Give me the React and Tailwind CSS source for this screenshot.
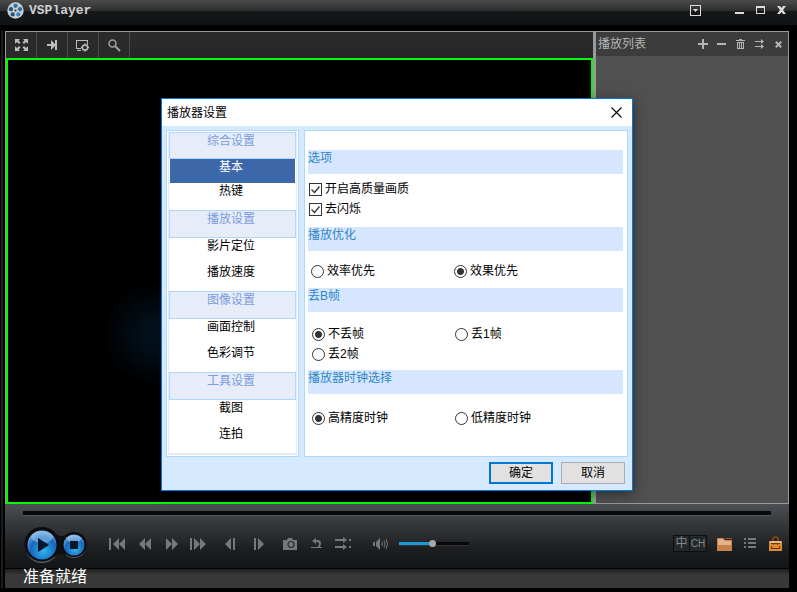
import React, { useState } from 'react';

const MENU = [
  { title: '综合设置', items: ['基本', '热键'] },
  { title: '播放设置', items: ['影片定位', '播放速度'] },
  { title: '图像设置', items: ['画面控制', '色彩调节'] },
  { title: '工具设置', items: ['截图', '连拍'] },
];

const Icon = ({ w = 16, h = 16, children, className = '' }) => (
  <svg width={w} height={h} viewBox={`0 0 ${w} ${h}`} fill="currentColor" className={`shrink-0 ${className}`} aria-hidden="true">
    {children}
  </svg>
);

const IconButton = ({ label, className, children, onClick }) => (
  <button type="button" aria-label={label} title={label} onClick={onClick} className={`flex items-center justify-center ${className}`}>
    {children}
  </button>
);

const Logo = () => (
  <svg width="17" height="17" viewBox="0 0 17 17" aria-hidden="true">
    <circle cx="8.5" cy="8.5" r="8.2" fill="#c9cdd0" />
    <circle cx="8.5" cy="3.8" r="2.1" fill="#2b6ea8" />
    <circle cx="4" cy="7.2" r="2.1" fill="#1d5488" />
    <circle cx="13" cy="7.2" r="2.1" fill="#2b6ea8" />
    <circle cx="5.7" cy="12.4" r="2.1" fill="#1d5488" />
    <circle cx="11.3" cy="12.4" r="2.1" fill="#3a86c4" />
    <circle cx="8.5" cy="8.6" r="1" fill="#333" />
  </svg>
);

const TitleBar = () => (
  <header className="flex h-[25px] shrink-0 items-start bg-[linear-gradient(#4b4b4b_0,#2c2d2e_11px,#151719_11px,#111315_100%)] pr-[5px] pl-[7px] text-[#dcdcdc]">
    <div className="flex h-[21px] flex-1 items-center gap-[5px]">
      <Logo />
      <h1 className="font-['Liberation_Mono',monospace] text-[13px] leading-[20px] font-bold text-[#d0d0d0]">VSPlayer</h1>
    </div>
    <IconButton label="菜单" className="mr-[23px] h-[21px] w-[21px]">
      <Icon w={11} h={11}>
        <path d="M0 0h11v11H0zM1 1v9h9V1z" fillRule="evenodd" />
        <path d="M3 4h5L5.500 7z" />
      </Icon>
    </IconButton>
    <IconButton label="最小化" className="h-[21px] w-[21px]">
      <Icon w={9} h={9}><path d="M0 6h9v2H0z" /></Icon>
    </IconButton>
    <IconButton label="最大化" className="h-[21px] w-[21px]">
      <Icon w={9} h={9}><path d="M0 0h9v8H0zM1 2v5h7V2z" fillRule="evenodd" /></Icon>
    </IconButton>
    <IconButton label="关闭" className="h-[21px] w-[21px]">
      <Icon w={9} h={9}><path d="M0 0h3l1.500 2L6 0h3L6 4l3 4H6L4.500 6 3 8H0l3-4z" /></Icon>
    </IconButton>
  </header>
);

const toolButton = 'h-full w-[31px] border-r border-[#4a4a4a] bg-[#2a2a2a]';

const VideoArea = () => (
  <section className="flex min-w-0 flex-1 flex-col border-t border-l border-[#999]">
    <div className="flex h-[26px] shrink-0 bg-[linear-gradient(#2c2c2c,#262626)] text-[#bdbdbd]">
      <IconButton label="全屏" className={toolButton}>
        <Icon w={13} h={12}>
          <path d="M0 0h5L3.500 1.500l2 2-1.500 1.500-2-2L0.500 4.500 0 4zM13 0H8l1.500 1.500-2 2L9 5l2-2 1.500 1.500.5-.5zM0 12h5l-1.500-1.500 2-2L4 7 2 9 .5 7.500 0 8zM13 12H8l1.500-1.500-2-2L9 7l2 2 1.500-1.500.5.5z" />
        </Icon>
      </IconButton>
      <IconButton label="置顶" className={toolButton}>
        <Icon w={11} h={12}><path d="M0 5h4V1l4 4V1h2v10H8V7l-4 4V7H0z" /></Icon>
      </IconButton>
      <IconButton label="设置" className={toolButton}>
        <Icon w={14} h={13}>
          <path d="M0 1h12v5h-1V2H1v7h4v1H0zM1 11h4v1H1z" />
          <circle cx="9" cy="8.500" r="2.600" fill="none" stroke="currentColor" strokeWidth="1.500" />
          <path d="M8.300 4.500h1.400v1.500H8.300zM8.300 11h1.400v1.500H8.300zM5 7.800h1.500v1.400H5zM11.500 7.800H13v1.400h-1.500z" />
        </Icon>
      </IconButton>
      <IconButton label="缩放" className={toolButton}>
        <Icon w={13} h={13} className="text-[#a0a0a0]">
          <circle cx="4.500" cy="4.500" r="3.500" fill="none" stroke="currentColor" strokeWidth="1.500" />
          <path d="M7 7l5 5" stroke="currentColor" strokeWidth="2" />
        </Icon>
      </IconButton>
    </div>
    <div className="flex-1 border-2 border-[#00fb06] bg-[radial-gradient(ellipse_70px_55px_at_28%_62%,#051828,transparent)]" />
  </section>
);

const listButton = 'h-6 w-[19px]';

const Playlist = () => (
  <aside className="flex w-[196px] shrink-0 flex-col border border-l-3 border-[#999] bg-[#505050] text-[#b5b5b5]">
    <div className="flex h-6 items-center bg-[#3c3c3c] pl-[2px]">
      <h2 className="flex-1 text-xs">播放列表</h2>
      <IconButton label="添加" className={listButton}>
        <Icon w={10} h={10}><path d="M4 0h2v4h4v2H6v4H4V6H0V4h4z" /></Icon>
      </IconButton>
      <IconButton label="移除" className={listButton}>
        <Icon w={9} h={10}><path d="M0 4h9v2H0z" /></Icon>
      </IconButton>
      <IconButton label="清空" className={listButton}>
        <Icon w={9} h={10}>
          <path d="M3 0h3v1h3v1H0V1h3zM1 3h7v7H1zM2 4v5h1V4zM4 4v5h1V4zM6 4v5h1V4z" fillRule="evenodd" />
        </Icon>
      </IconButton>
      <IconButton label="顺序播放" className={listButton}>
        <Icon w={10} h={10}><path d="M0 2h6V0l3 2.500L6 5V3H0zM0 7h6V5l3 2.500L6 10V8H0z" /></Icon>
      </IconButton>
      <IconButton label="关闭列表" className={listButton}>
        <Icon w={7} h={7}><path d="M.8.8l5.400 5.400M6.200.8L.8 6.200" stroke="currentColor" strokeWidth="2" /></Icon>
      </IconButton>
    </div>
  </aside>
);

const ctl27 = 'h-8 w-[27px]';
const ctl29 = 'h-8 w-[29px]';

const TransportCluster = () => (
  <div className="relative flex h-10 w-[68px] items-center pt-[2px] pl-[4px]">
    <svg className="absolute inset-0" width="68" height="40" viewBox="0 0 68 40" aria-hidden="true">
      <defs>
        <linearGradient id="rim" x1="0" y1="0" x2="0" y2="1">
          <stop offset="0" stopColor="#08090a" />
          <stop offset="0.7" stopColor="#1b1c1e" />
          <stop offset="1" stopColor="#5d5f61" />
        </linearGradient>
        <radialGradient id="orb" cx="0.55" cy="0.7" r="0.75">
          <stop offset="0" stopColor="#2fb4ea" />
          <stop offset="0.6" stopColor="#1766bd" />
          <stop offset="1" stopColor="#8fc0ec" />
        </radialGradient>
      </defs>
      <circle cx="19" cy="21" r="18" fill="url(#rim)" />
      <circle cx="51" cy="21" r="13" fill="url(#rim)" />
      <path d="M31 9q6 5 12 2v20q-6-3-12 2z" fill="#0f1011" />
      <circle cx="19" cy="21" r="16.500" fill="#0b0d10" />
      <circle cx="51" cy="21" r="12" fill="#0b0d10" />
      <circle cx="19" cy="21" r="14.500" fill="url(#orb)" />
      <circle cx="51" cy="21" r="10.500" fill="url(#orb)" />
      <ellipse cx="19" cy="13" rx="11" ry="6" fill="#b9dcf7" opacity="0.45" />
      <ellipse cx="51" cy="15" rx="7" ry="4" fill="#c9e6fa" opacity="0.45" />
    </svg>
    <IconButton label="播放" className="relative h-[30px] w-[30px] rounded-full pl-[3px] text-[#07182c]">
      <Icon w={12} h={14}><path d="M0 0l11 7-11 7z" /></Icon>
    </IconButton>
    <IconButton label="停止" className="relative ml-[6px] h-[22px] w-[22px] rounded-full text-[#07182c]">
      <Icon w={8} h={8}><path d="M0 0h8v8H0z" /></Icon>
    </IconButton>
  </div>
);

const Controls = () => {
  const [volume, setVolume] = useState(48);

  return (
    <section className="h-16 shrink-0 bg-[linear-gradient(#4c4f53_0,#35383b_20px,#1d1e20_45px,#141516_100%)] pt-[7px] text-[#75797c]">
      <div className="flex pr-[18px] pl-[18px]">
        <input
          type="range"
          aria-label="播放进度"
          defaultValue="0"
          className="h-[5px] w-full appearance-none border-b border-[#55585b] bg-[#08090a] [&::-webkit-slider-thumb]:w-0 [&::-webkit-slider-thumb]:appearance-none"
        />
      </div>
      <div className="flex h-[54px] items-center pt-px pl-[18px]">
        <TransportCluster />
        <div className="ml-[13px] flex">
          <IconButton label="上一个" className={ctl27}>
            <Icon w={17} h={12}><path d="M0 0h2v12H0zM4 6l6-6v12zM10 6l6-6v12z" /></Icon>
          </IconButton>
          <IconButton label="快退" className={ctl27}>
            <Icon w={12} h={12}><path d="M0 6l6-6v12zM6 6l6-6v12z" /></Icon>
          </IconButton>
          <IconButton label="快进" className={ctl27}>
            <Icon w={12} h={12}><path d="M0 0l6 6-6 6zM6 0l6 6-6 6z" /></Icon>
          </IconButton>
          <IconButton label="下一个" className={ctl27}>
            <Icon w={17} h={12}><path d="M0 0h2v12H0zM4 0l6 6-6 6zM10 0l6 6-6 6z" /></Icon>
          </IconButton>
        </div>
        <div className="ml-[3px] flex">
          <IconButton label="单帧后退" className={ctl29}>
            <Icon w={10} h={12}><path d="M0 6l6-6v12zM8 0h2v12H8z" /></Icon>
          </IconButton>
          <IconButton label="单帧前进" className={ctl29}>
            <Icon w={10} h={12}><path d="M0 0h2v12H0zM4 0l6 6-6 6z" /></Icon>
          </IconButton>
        </div>
        <div className="ml-[3px] flex">
          <IconButton label="截图" className={ctl27}>
            <Icon w={14} h={12}>
              <path d="M0 2h4l1-2h4l1 2h4v10H0z" />
              <circle cx="8" cy="6.500" r="3" fill="none" stroke="#26282a" strokeWidth="1.200" />
            </Icon>
          </IconButton>
          <IconButton label="循环" className={ctl27}>
            <Icon w={12} h={12}>
              <path d="M1 3L5 0v2h1.500q3.500 0 3.500 3.500 0 2-1.500 3.500H11v1H0V9h6.500Q8 7.500 8 6q0-2-2-2H5v2z" />
            </Icon>
          </IconButton>
          <IconButton label="播放顺序" className={ctl27}>
            <Icon w={17} h={13}>
              <path d="M0 2h8V0l4 3-4 3V4H0zM0 9h8V7l4 3-4 3v-2H0zM14 2h2v2h-2zM14 9h2v2h-2z" />
            </Icon>
          </IconButton>
        </div>
        <IconButton label="静音" className="ml-[10px] h-8 w-[27px]">
          <Icon w={15} h={12}>
            <path d="M0 4h2v4H0zM3 4l4-4v12L3 8z" />
            <path d="M9 4q1 2 0 4M11 2.500q2 3.500 0 7M13 1q3 5 0 10" fill="none" stroke="currentColor" />
          </Icon>
        </IconButton>
        <input
          type="range"
          aria-label="音量"
          min="0"
          max="100"
          value={volume}
          onChange={(e) => setVolume(e.target.value)}
          style={{ backgroundImage: `linear-gradient(90deg, #1b9ad8 ${volume}%, #060708 ${volume}%)` }}
          className="ml-[5px] h-[4px] w-[70px] appearance-none border-b border-[#333] [&::-webkit-slider-thumb]:h-[7px] [&::-webkit-slider-thumb]:w-[7px] [&::-webkit-slider-thumb]:appearance-none [&::-webkit-slider-thumb]:rounded-full [&::-webkit-slider-thumb]:bg-[#a8a8a8]"
        />
        <div className="ml-auto flex items-center">
          <div className="mr-[4px] flex h-[17px] border border-[#0d0e0f] text-xs leading-[15px] text-[#84898d]">
            <button type="button" className="w-4 border-r border-[#0d0e0f] bg-[#25282a]">中</button>
            <button type="button" className="w-4 bg-[#25282a] font-['Liberation_Sans',sans-serif] text-[10px]">CH</button>
          </div>
          <IconButton label="打开文件" className="h-8 w-[27px]">
            <Icon w={16} h={14}>
              <path d="M0 1h6l2 2h7v11H0z" fill="#c9814b" />
              <path d="M1 2h5l2 2h6v4H1z" fill="#e3b38e" />
              <path d="M8 1h7v1H8z" fill="#99592d" />
            </Icon>
          </IconButton>
          <IconButton label="播放列表" className="h-8 w-[24px]">
            <Icon w={12} h={11}>
              <path d="M0 0h2v2H0zM4 0h8v2H4zM0 4h2v2H0zM4 4h8v2H4zM0 8h2v2H0zM4 8h8v2H4z" />
            </Icon>
          </IconButton>
          <IconButton label="工具箱" className="h-8 w-[27px]">
            <Icon w={13} h={15}>
              <path d="M4 5V3q0-2 2.500-2T9 3v2" fill="none" stroke="#8b4a14" strokeWidth="1.500" />
              <path d="M0 5h13v10H0z" fill="#dc8a33" />
              <path d="M1 5h11v2H1z" fill="#efb985" />
              <path d="M2 7h9v1H2zM4 8h1v1H4zM8 8h1v1H8zM2 10h1v2h7v-2h1v3H2z" fill="#6b3808" />
            </Icon>
          </IconButton>
        </div>
      </div>
    </section>
  );
};

const Section = ({ title, bodyClass, children }) => (
  <fieldset className="block">
    <legend className="block h-6 w-full bg-[#d6e6ff] leading-[16px] text-[#2f86c6]">{title}</legend>
    <div className={bodyClass}>{children}</div>
  </fieldset>
);

const Check = ({ label }) => (
  <label className="flex h-5 items-center gap-[3px]">
    <span className="grid">
      <input type="checkbox" defaultChecked className="peer col-start-1 row-start-1 h-[13px] w-[13px] appearance-none border border-[#333] bg-white" />
      <svg className="pointer-events-none invisible col-start-1 row-start-1 peer-checked:visible" width="13" height="13" viewBox="0 0 13 13" aria-hidden="true">
        <path d="M2.500 6.500l3 3 5-6" fill="none" stroke="#333" strokeWidth="1.300" />
      </svg>
    </span>
    {label}
  </label>
);

const Radio = ({ name, label, checked }) => (
  <label className="flex h-5 items-center gap-[3px]">
    <input
      type="radio"
      name={name}
      defaultChecked={checked}
      className="h-[13px] w-[13px] appearance-none rounded-full border border-[#333] bg-white checked:bg-[radial-gradient(circle,#333_3px,#fff_4px)]"
    />
    {label}
  </label>
);

const SettingsDialog = ({ onClose }) => {
  const [active, setActive] = useState('基本');

  return (
    <div
      role="dialog"
      aria-label="播放器设置"
      className="absolute top-[98px] left-[161px] flex w-[472px] flex-col border border-[#0078d7] bg-[#d5e9ff] text-xs text-black shadow-[0_3px_12px_rgba(0,0,0,0.45)]"
    >
      <div className="flex h-[27px] items-center bg-white pr-[9px] pl-[5px]">
        <h2 className="flex-1">播放器设置</h2>
        <IconButton label="关闭" className="h-[14px] w-[13px]" onClick={onClose}>
          <Icon w={11} h={11}><path d="M.5.5l10 10M10.500.5l-10 10" stroke="#000" strokeWidth="1.100" /></Icon>
        </IconButton>
      </div>

      <div className="flex gap-[5px] px-[4px] pt-[4px]">
        <nav className="w-[133px] shrink-0 border border-[#aed6ff] bg-white p-px">
          <div className="border-x border-b-2 border-[#e3ecfa]">
            {MENU.map((group, i) => (
              <div key={group.title} className={i === 0 ? 'h-[78px]' : 'h-[81px]'}>
                <h3 className={`border border-[#aed6ff] bg-[#e6edf8] pr-[3px] text-center leading-[16px] text-[#7d9be0] ${i === 0 ? 'h-[27px]' : 'h-7'}`}>
                  {group.title}
                </h3>
                <div className="px-px">
                  {group.items.map((item) => (
                    <button
                      key={item}
                      type="button"
                      onClick={() => setActive(item)}
                      className={`flex w-full items-start justify-center pr-[3px] leading-[17px] ${i === 0 ? 'h-6' : 'h-[26px]'} ${
                        item === active ? 'bg-[#3c68aa] text-white' : ''
                      }`}
                    >
                      {item}
                    </button>
                  ))}
                </div>
              </div>
            ))}
          </div>
        </nav>

        <form className="min-w-0 flex-1 border border-[#aed6ff] bg-white pt-[19px] pr-[4px] pl-[3px]">
          <Section title="选项" bodyClass="pt-[5px] pb-2 pl-px">
            <Check label="开启高质量画质" />
            <Check label="去闪烁" />
          </Section>
          <Section title="播放优化" bodyClass="grid grid-cols-[143px_1fr] pt-[10px] pb-[7px] pl-[3px]">
            <Radio name="optimize" label="效率优先" />
            <Radio name="optimize" label="效果优先" checked />
          </Section>
          <Section title="丢B帧" bodyClass="grid grid-cols-[143px_1fr] pt-3 pb-[6px] pl-[4px]">
            <Radio name="drop" label="不丢帧" checked />
            <Radio name="drop" label="丢1帧" />
            <Radio name="drop" label="丢2帧" />
          </Section>
          <Section title="播放器时钟选择" bodyClass="grid grid-cols-[143px_1fr] pt-[14px] pl-[4px]">
            <Radio name="clock" label="高精度时钟" checked />
            <Radio name="clock" label="低精度时钟" />
          </Section>
        </form>
      </div>

      <div className="flex justify-end gap-2 pt-[5px] pr-[7px] pb-[6px]">
        <button type="button" onClick={onClose} className="h-[22px] w-16 border-2 border-[#0078d7] bg-[#e1e1e1] leading-[18px]">确定</button>
        <button type="button" onClick={onClose} className="h-[22px] w-16 border border-[#adadad] bg-[#e1e1e1] leading-[20px]">取消</button>
      </div>
    </div>
  );
};

const App = () => {
  const [showSettings, setShowSettings] = useState(true);

  return (
    <div className="relative flex min-h-screen flex-col bg-black font-['Liberation_Sans','Noto_Sans_CJK_SC',sans-serif]">
      <TitleBar />
      <div className="mt-[6px] mb-[4px] ml-px flex flex-1 flex-col border-l-2 border-[#1c1c1c] pr-2 pl-[2px]">
        <main className="flex flex-1">
          <VideoArea />
          <Playlist />
        </main>
        <Controls />
        <footer className="mt-px h-[19px] shrink-0 bg-[linear-gradient(#202020,#383838_6px)] pl-[18px] text-base leading-[16px] text-white">
          准备就绪
        </footer>
      </div>
      {showSettings && <SettingsDialog onClose={() => setShowSettings(false)} />}
    </div>
  );
};

export default App;
